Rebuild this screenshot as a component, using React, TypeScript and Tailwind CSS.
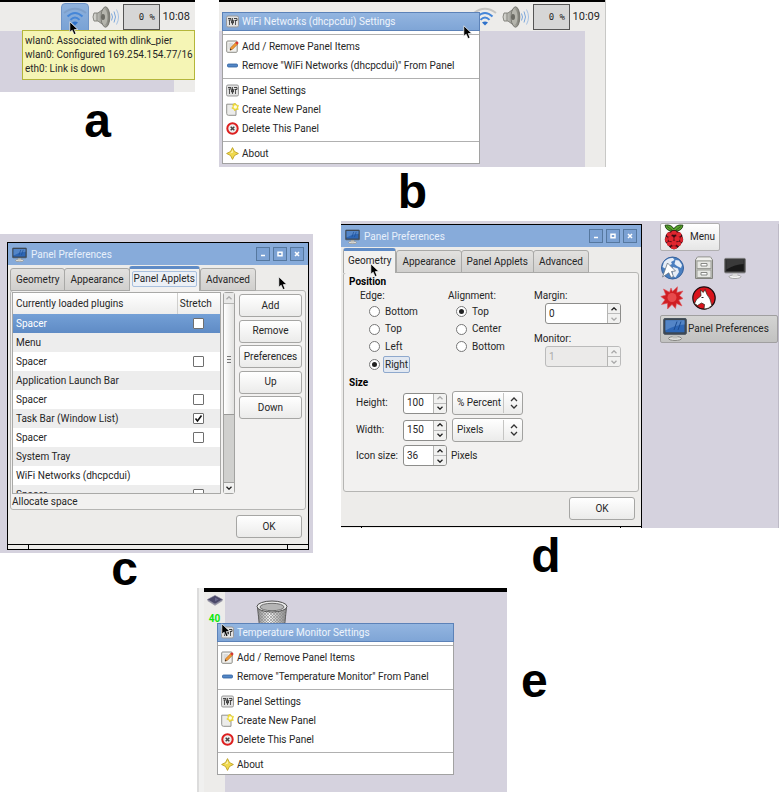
import React from "react";

function Cursor({ className = "" }: { className?: string }) {
  return (
    <svg viewBox="0 0 10 15" width="10" height="15" className={"pointer-events-none absolute z-20 " + className} aria-hidden="true">
      <path d="M0.8 0.8 L0.8 11.2 L3.2 9.2 L5 13.6 L7 12.8 L5.3 8.6 L8.8 8.4 Z" fill="#000" stroke="#fff" strokeWidth="0.7" />
    </svg>
  );
}

function WifiIcon({ topColor }: { topColor: string }) {
  return (
    <svg viewBox="0 0 24 20" width="24" height="20" fill="none" strokeWidth="2" aria-hidden="true">
      <path d="M1 6 Q12 -2.500 23 6" stroke={topColor} />
      <path d="M4.500 9.500 Q12 2.500 19.500 9.500" stroke="#4586d8" />
      <path d="M7.500 12.900 Q12 8.300 16.500 12.900" stroke="#4586d8" />
      <path d="M9 15.500 Q12 13.500 15 15.500 L12 18.500 Z" fill="#2f72cb" />
    </svg>
  );
}

function SpeakerIcon() {
  return (
    <svg viewBox="0 0 28 24" width="28" height="24" aria-hidden="true">
      <defs>
        <linearGradient id="cone" x1="0" x2="1">
          <stop offset="0" stopColor="#deded9" />
          <stop offset="1" stopColor="#8b8b84" />
        </linearGradient>
        <linearGradient id="rim" x1="0" x2="1">
          <stop offset="0" stopColor="#c9c9c2" />
          <stop offset="1" stopColor="#77776f" />
        </linearGradient>
      </defs>
      <path d="M2 8 Q0 12 2 16 L6 16 L12 20.500 L12 3.500 L6 8 Z" fill="url(#cone)" stroke="#7c7c75" strokeWidth="0.900" />
      <path d="M5 8 V16" stroke="#8b8b85" fill="none" />
      <ellipse cx="13.500" cy="12" rx="4.300" ry="10.200" fill="url(#rim)" stroke="#70706a" strokeWidth="0.900" />
      <ellipse cx="12.500" cy="12" rx="3" ry="7.500" fill="#b5b5ad" />
      <ellipse cx="11" cy="12" rx="2" ry="3" fill="#6b6b64" />
      <g fill="none" stroke="#7ba7dc">
        <path d="M19.500 8.500 Q21.500 12 19.500 15.500" />
        <path d="M22 6.500 Q25 12 22 17.500" />
        <path d="M24.500 4.500 Q28.500 12 24.500 19.500" stroke="#a5c1e4" />
      </g>
    </svg>
  );
}

function ScreenIcon({ size = 15, dark = false }: { size?: number; dark?: boolean }) {
  return (
    <svg viewBox="0 0 24 24" width={size} height={size} aria-hidden="true">
      <ellipse cx="12" cy="21.500" rx="6.500" ry="2" fill={dark ? "#f4f4f4" : "#e0e0dd"} stroke={dark ? "#9a9a9a" : "#7f7f7b"} strokeWidth="0.900" />
      <path d="M9.500 17 H14.500 V21.500 H9.500 Z" fill={dark ? "#dcdcdc" : "#bfbfbb"} />
      <rect x="0.700" y="1.500" width="22.600" height="15.800" rx="1.200" fill={dark ? "#3b3b3b" : "#3c4650"} stroke={dark ? "#777" : "#46525f"} />
      <rect x="2.500" y="3.300" width="19" height="12" fill={dark ? "#191919" : "#2d66b5"} />
      <path d="M2.500 3.300 H21.500 V7.500 Q12 8 2.500 13.500 Z" fill={dark ? "#3a3a3a" : "#5385c7"} />
      {!dark && <path d="M14 4.500 L11 13 M18 4.500 L15 13" stroke="#1b4c91" strokeWidth="1" />}
    </svg>
  );
}

function PrefsIcon() {
  return (
    <svg viewBox="0 0 13 13" width="13" height="13" aria-hidden="true">
      <rect x="0.500" y="1" width="12" height="11" rx="1.500" fill="#e2e2e2" stroke="#999" />
      <path d="M3.500 5 V10 M6.500 3 V10 M9.500 5 V10" fill="none" stroke="#555" />
      <path d="M2 3.500 H5 V5 H2.500 M8 3.500 H11 V5.500 H8.500 M5.500 5.500 H7.500 V8 H5.500 Z" fill="none" stroke="#333" strokeWidth="0.900" />
    </svg>
  );
}

function EditIcon() {
  return (
    <svg viewBox="0 0 13 13" width="13" height="13" aria-hidden="true">
      <rect x="0.700" y="1" width="10.500" height="11.300" rx="1" fill="#f1f1ee" stroke="#8b8b86" />
      <path d="M2.500 4 H7 M2.500 6 H6 M2.500 8 H5" stroke="#bbb" strokeWidth="0.800" />
      <path d="M4 10.200 L4.800 7.600 L10.200 2 L12 3.700 L6.500 9.300 Z" fill="#f19a31" stroke="#a5591c" strokeWidth="0.600" />
      <path d="M9.300 2.900 L10.600 1.400 Q12.300 1.300 12.500 3 L11.200 4.600 Z" fill="#d93333" />
      <path d="M4 10.200 L4.500 8.600 L5.600 9.700 Z" fill="#222" />
    </svg>
  );
}

function MinusIcon() {
  return (
    <svg viewBox="0 0 13 13" width="13" height="13" aria-hidden="true">
      <rect x="1.500" y="5" width="10" height="3" rx="1" fill="#5487c6" stroke="#2f5f9f" strokeWidth="0.800" />
    </svg>
  );
}

function NewIcon() {
  return (
    <svg viewBox="0 0 13 13" width="13" height="13" aria-hidden="true">
      <path d="M0.700 1.200 H10 V12.300 H2.500 Q0.700 12.300 0.700 10.500 Z" fill="#ececea" stroke="#93938f" />
      <path d="M9 0 L10.200 2 L12.600 2.400 L11.800 4.500 L12.300 6.500 L10 6.500 L8.800 8 L7.800 6 L5.800 5.200 L7 3.500 L6.800 1.500 Z" fill="#f2df3a" stroke="#dcc21d" strokeWidth="0.500" />
      <circle cx="9.300" cy="4" r="1.700" fill="#fffce0" />
    </svg>
  );
}

function DeleteIcon() {
  return (
    <svg viewBox="0 0 13 13" width="13" height="13" aria-hidden="true">
      <circle cx="6.500" cy="6.500" r="5.200" fill="#eee" stroke="#dd2020" strokeWidth="2" />
      <path d="M4.700 4.700 L8.300 8.300 M8.300 4.700 L4.700 8.300" stroke="#444" strokeWidth="1.500" />
    </svg>
  );
}

function AboutIcon() {
  return (
    <svg viewBox="0 0 13 13" width="13" height="13" aria-hidden="true">
      <path d="M6.500 0.600 L8.500 4.500 L12.400 6.500 L8.500 8.500 L6.500 12.400 L4.500 8.500 L0.600 6.500 L4.500 4.500 Z" fill="#f0d94e" stroke="#b89a1c" strokeWidth="0.800" />
      <path d="M6.500 2.500 L7 5.500 L4 6.500 L5.500 5 Z" fill="#fdf6c0" />
    </svg>
  );
}

function RaspberryIcon() {
  return (
    <svg viewBox="0 0 20 26" width="20" height="26" aria-hidden="true">
      <path d="M9.500 7 Q2 7.500 1 1.200 Q7.500 0 9.800 5 Q12.500 0 19 1.200 Q18 7.500 10.500 7 Z" fill="#59a52c" stroke="#1d3a12" strokeWidth="0.900" />
      <path d="M3 2.500 L8 6 M17 2.500 L12 6" stroke="#26501a" strokeWidth="0.700" />
      <path d="M6 7.500 Q10 4.500 14 7.500 Q18.500 9.500 18.500 13 Q20.500 17 17 20 Q14 24.500 10 25.500 Q6 24.500 3 20 Q-0.500 17 1.500 13 Q1.500 9.500 6 7.500 Z" fill="#3a0a12" />
      <g fill="#e0262f">
        <ellipse cx="10" cy="8.700" rx="2.900" ry="2" />
        <ellipse cx="5.300" cy="10.500" rx="2.600" ry="2.300" />
        <ellipse cx="14.700" cy="10.500" rx="2.600" ry="2.300" />
        <ellipse cx="6.900" cy="14.700" rx="2.800" ry="2.600" />
        <ellipse cx="13.100" cy="14.700" rx="2.800" ry="2.600" />
        <ellipse cx="2.500" cy="15.500" rx="1.500" ry="2.700" />
        <ellipse cx="17.500" cy="15.500" rx="1.500" ry="2.700" />
        <ellipse cx="10" cy="19.200" rx="3" ry="2.600" />
        <ellipse cx="5.100" cy="19.700" rx="2.200" ry="2.200" />
        <ellipse cx="14.900" cy="19.700" rx="2.200" ry="2.200" />
        <ellipse cx="10" cy="23.500" rx="3" ry="1.500" />
      </g>
    </svg>
  );
}

function GlobeIcon() {
  return (
    <svg viewBox="0 0 24 24" width="24" height="24" aria-hidden="true">
      <circle cx="12.500" cy="12" r="11" fill="#4a7fc0" stroke="#35619c" />
      <g fill="#e6edf6">
        <path d="M4 6 Q8 1.500 13 2 L14.500 4 L11 6 L12 8 L8 10 L6 13 L2.500 11 Z" />
        <path d="M15.500 4 L19 4.500 L22 9 L21 12 L17 10 L14.500 8 Z" />
        <path d="M13 11 L18 12.500 L19 16 L15.500 21.500 L13 20 L12.500 15 Z" />
      </g>
      <path d="M7.500 7 L15.500 15 L11.500 15.500 L13.500 20.500 L11 21.500 L8.800 16.800 L2.500 21 Z" fill="#fff" stroke="#6a7684" strokeWidth="0.800" />
    </svg>
  );
}

function CabinetIcon() {
  return (
    <svg viewBox="0 0 20 24" width="20" height="24" aria-hidden="true">
      <path d="M3.500 1 H16.500 L18.500 4 V22.500 H1.500 V4 Z" fill="#c9cac5" stroke="#83847f" />
      <path d="M3.500 1.500 H16.500 L18 4 H2 Z" fill="#f0f0ee" />
      <rect x="3" y="5" width="14" height="7.500" fill="#e6e7e3" stroke="#9c9d98" />
      <rect x="3" y="14" width="14" height="7.500" fill="#e6e7e3" stroke="#9c9d98" />
      <path d="M7 7.500 H13 V10 H7 Z M7 16.500 H13 V19 H7 Z" fill="#fff" stroke="#7c7d78" strokeWidth="0.900" />
    </svg>
  );
}

function StarburstIcon() {
  return (
    <svg viewBox="0 0 24 24" width="24" height="24" aria-hidden="true">
      <path d="M12.500 5.500 L17.500 0.800 L16.800 6.500 L23 5 L19.500 9.500 L23 12.500 L18.800 14 L22 20 L16.500 17.500 L15.500 22.500 L12 18.500 L7.500 23 L7.500 17.200 L1.500 18.500 L5 13.800 L0.800 10.500 L5.800 9 L3.500 3 L9.500 6.200 L11 2 Z" fill="#cf1f24" stroke="#e0565a" strokeWidth="0.600" />
      <circle cx="12" cy="11.500" r="4.500" fill="#e84a4c" />
    </svg>
  );
}

function WolfIcon() {
  return (
    <svg viewBox="0 0 24 24" width="24" height="24" aria-hidden="true">
      <circle cx="12" cy="12" r="11.200" fill="#d9141c" stroke="#1d1013" strokeWidth="1.200" />
      <path d="M2.500 17.500 L4.500 13.500 L9 9.800 L8.500 4 L11.300 6.500 L13 3.500 L15 8.500 Q18.500 12 19.800 19.500 Q16.500 23.200 12 23 L12.500 18.500 L9.500 17 L5.500 19.500 Z" fill="#fff" stroke="#221" strokeWidth="0.700" />
      <path d="M9.500 11.500 L11.500 11.500" stroke="#222" />
    </svg>
  );
}

function ChipIcon() {
  return (
    <svg viewBox="0 0 16 11" width="16" height="11" aria-hidden="true">
      <path d="M0.500 4.500 L8 9 L15.500 4.500 L15.500 6 L8 10.700 L0.500 6 Z" fill="#9b9aa8" />
      <path d="M0.500 4.500 L8 0.500 L15.500 4.500 L8 9 Z" fill="#4a4868" stroke="#76748f" strokeWidth="0.600" />
      <path d="M8 2.500 L11.500 4.500 L8 6.500 Z" fill="#68668c" />
    </svg>
  );
}

function TrashIcon() {
  return (
    <svg viewBox="0 0 32 32" width="32" height="32" aria-hidden="true">
      <defs>
        <pattern id="mesh" width="3" height="3" patternUnits="userSpaceOnUse">
          <path d="M0 0 L3 3 M3 0 L0 3" stroke="#888" strokeWidth="0.600" />
        </pattern>
        <linearGradient id="bin" x1="0" x2="1">
          <stop offset="0" stopColor="#8a8a8a" />
          <stop offset="0.400" stopColor="#f4f4f4" />
          <stop offset="1" stopColor="#888" />
        </linearGradient>
      </defs>
      <path d="M1.500 8 L4 32 H28 L30.500 8 Z" fill="url(#bin)" stroke="#555" />
      <path d="M1.500 8 L4 32 H28 L30.500 8 Z" fill="url(#mesh)" />
      <ellipse cx="16" cy="7.500" rx="15" ry="5.500" fill="#ededed" stroke="#4d4d4d" />
      <ellipse cx="16" cy="8" rx="12" ry="3.700" fill="#b5b5b5" stroke="#6c6c6c" />
    </svg>
  );
}

function Chevrons() {
  return (
    <svg viewBox="0 0 8 12" width="8" height="12" fill="none" stroke="#333" strokeWidth="1.300" aria-hidden="true">
      <path d="M1 4 L4 1 L7 4 M1 8 L4 11 L7 8" />
    </svg>
  );
}

function Arrow({ up = false, faded = false }: { up?: boolean; faded?: boolean }) {
  return (
    <svg viewBox="0 0 6 4" width="6" height="4" fill="none" stroke={faded ? "#aaa" : "#222"} strokeWidth="1.300" aria-hidden="true">
      <path d={up ? "M0.500 3.300 L3 0.800 L5.500 3.300" : "M0.500 0.700 L3 3.200 L5.500 0.700"} />
    </svg>
  );
}

function ContextMenu({ subject, className }: { subject: string; className: string }) {
  const groups = [
    [
      { label: "Add / Remove Panel Items", icon: <EditIcon /> },
      { label: `Remove "${subject}" From Panel`, icon: <MinusIcon /> },
    ],
    [
      { label: "Panel Settings", icon: <PrefsIcon /> },
      { label: "Create New Panel", icon: <NewIcon /> },
      { label: "Delete This Panel", icon: <DeleteIcon /> },
    ],
    [{ label: "About", icon: <AboutIcon /> }],
  ];
  return (
    <div role="menu" className={"absolute z-10 border-x border-b border-[#a2a2a2] bg-white " + className}>
      <div className="-mx-px">
        <button role="menuitem" className="flex h-[19px] w-full items-center gap-[3px] border border-[#5c82b8] bg-linear-to-b from-[#93b5e0] to-[#7fa5d6] pl-[3px] text-[#eef4fc]">
          <PrefsIcon />
          {subject} Settings
        </button>
      </div>
      {groups.map((group, i) => (
        <React.Fragment key={i}>
          <div role="separator" className="flex h-1.5 items-center">
            <div className="h-px w-full bg-[#b0b0b0]" />
          </div>
          {group.map((item) => (
            <button key={item.label} role="menuitem" className="flex h-[19px] w-full items-center gap-[3px] pl-[3px] whitespace-nowrap">
              {item.icon}
              {item.label}
            </button>
          ))}
        </React.Fragment>
      ))}
    </div>
  );
}

function TopPanel({ time, active = false }: { time: string; active?: boolean }) {
  return (
    <div className="flex h-[31px] items-center justify-end border-t-2 border-black bg-[#edecea] pr-[5px]">
      <button
        aria-label="Network"
        className={
          active
            ? "flex h-7 w-7 items-center justify-center rounded-t-sm border border-[#6e94c7] bg-linear-to-b from-[#8fb2dd] to-[#79a2d5]"
            : "flex h-7 w-7 items-center justify-center"
        }
      >
        <WifiIcon topColor={active ? "#7d9fca" : "#c5c5c3"} />
      </button>
      <button aria-label="Volume" className="mx-[3px] flex">
        <SpeakerIcon />
      </button>
      <div className="flex h-[26px] w-[37px] items-center justify-end border border-[#555] bg-[#d6d6d6] pr-1 font-['DejaVu_Sans_Mono',monospace] text-[9px]">
        0 %
      </div>
      <time className="w-[30px] text-right text-[11px]">{time}</time>
    </div>
  );
}

function TitleButton({ label, children }: { label: string; children: React.ReactNode }) {
  return (
    <button aria-label={label} className="flex h-3.5 w-3.5 items-center justify-center border border-[#56789f] bg-[#7ba1d3]">
      <svg viewBox="0 0 6 6" width="6" height="6" fill="none" stroke="#fff" strokeWidth="1.500" aria-hidden="true">
        {children}
      </svg>
    </button>
  );
}

const TABS = ["Geometry", "Appearance", "Panel Applets", "Advanced"];

function Button({ className = "", children }: { className?: string; children: React.ReactNode }) {
  return (
    <button className={"h-[23px] rounded-[3px] border border-[#a6a6a4] bg-linear-to-b from-white to-[#ebebea] text-center " + className}>
      {children}
    </button>
  );
}

function PrefsWindow({ active, clipped = false, children }: { active: string; clipped?: boolean; children: React.ReactNode }) {
  return (
    <section
      className={
        clipped
          ? "relative min-w-0 flex-1 border-t border-r border-black bg-[#edecea]"
          : "relative border border-black bg-[#edecea]"
      }
    >
      <header className="flex h-[22px] items-center gap-[3px] bg-[#87abda] pr-1 pl-1">
        <ScreenIcon />
        <h2 className="flex-1 pt-0.5 pl-px text-[#e7f0fb]">Panel Preferences</h2>
        <TitleButton label="Minimise"><path d="M1 4.500 H5" /></TitleButton>
        <TitleButton label="Maximise"><path d="M1 1.200 H5 V4.800 H1 Z" /></TitleButton>
        <TitleButton label="Close"><path d="M1 1 L5 5 M5 1 L1 5" /></TitleButton>
      </header>
      <div role="tablist" className="relative z-10 flex h-[26px] items-end px-0.5">
        {TABS.map((tab) =>
          tab === active ? (
            <button
              key={tab}
              role="tab"
              aria-selected="true"
              className="h-[25px] rounded-t-[3px] border border-t-[3px] border-b-0 border-[#a9a9a7] border-t-[#5f8bc6] bg-[#f2f1f0] px-0.5 pb-0.5"
            >
              <span className={clipped ? "block px-0.5" : "block rounded-xs border border-[#a9c0de] bg-[#ecf0f6] px-px"}>{tab}</span>
            </button>
          ) : (
            <button
              key={tab}
              role="tab"
              aria-selected="false"
              className="-mr-px h-[23px] rounded-t-[3px] border border-[#a9a9a7] bg-linear-to-b from-[#e2e1df] to-[#d0cfcd] px-[5px] pt-px"
            >
              {tab}
            </button>
          ),
        )}
      </div>
      <div className="mx-0.5 -mt-px min-h-[220px] rounded-[3px] border border-[#b5b5b3] bg-[#f2f1f0]">{children}</div>
      <div className="mt-[5px] mb-[6px] flex justify-end pr-[6px]">
        <Button className="w-[66px]">OK</Button>
      </div>
      <div className={clipped ? "flex h-0.5 border-t border-black px-5" : "flex h-[5px] border-t border-black px-5"}>
        <div className="flex-1 border-x border-black" />
      </div>
    </section>
  );
}

const PLUGINS: { name: string; stretch?: boolean }[] = [
  { name: "Spacer", stretch: false },
  { name: "Menu" },
  { name: "Spacer", stretch: false },
  { name: "Application Launch Bar" },
  { name: "Spacer", stretch: false },
  { name: "Task Bar (Window List)", stretch: true },
  { name: "Spacer", stretch: false },
  { name: "System Tray" },
  { name: "WiFi Networks (dhcpcdui)" },
  { name: "Spacer", stretch: false },
];

function AppletsTab() {
  return (
    <div className="pt-px pl-px">
      <div className="flex h-[202px] pr-[3px]">
        <div className="min-w-0 flex-1 overflow-hidden border border-[#a9a9a7] bg-white">
          <table className="w-full border-collapse">
            <thead>
              <tr className="h-[21px] bg-linear-to-b from-white to-[#ededec] text-left">
                <th className="border-r border-[#cfcfcd] pl-[3px] font-normal">Currently loaded plugins</th>
                <th className="w-[43px] pr-1.5 text-center font-normal">Stretch</th>
              </tr>
            </thead>
            <tbody>
              {PLUGINS.map((p, i) => (
                <tr key={i} className={i === 0 ? "h-[19px] bg-linear-to-b from-[#74a0d6] to-[#5f8bc5] text-white" : i % 2 ? "h-[19px] bg-[#ededed]" : "h-[19px] bg-white"}>
                  <td className="pt-px pl-[3px]">{p.name}</td>
                  <td>
                    {p.stretch !== undefined && (
                      <span className="relative flex h-[11px] justify-center">
                        <input
                          type="checkbox"
                          aria-label={`Stretch ${p.name}`}
                          defaultChecked={p.stretch}
                          className="peer h-[11px] w-[11px] appearance-none rounded-[1px] border border-[#6f6f6f] bg-white"
                        />
                        <svg viewBox="0 0 9 9" width="9" height="9" fill="none" stroke="#111" strokeWidth="1.600" className="pointer-events-none invisible absolute top-px peer-checked:visible">
                          <path d="M1.500 4.500 L3.500 7 L7.500 1.500" />
                        </svg>
                      </span>
                    )}
                  </td>
                </tr>
              ))}
            </tbody>
          </table>
        </div>
        <div className="mr-1 ml-0.5 flex w-3 flex-col rounded-[3px] border border-[#a2a2a0] bg-[#d0d0ce]">
          <button aria-label="Scroll up" className="flex h-[11px] items-center justify-center border-b border-[#b5b5b3] bg-[#e9e9e8]">
            <Arrow up faded />
          </button>
          <div className="flex h-[111px] flex-col items-center justify-center gap-0.5 border-b border-[#9a9a98] bg-linear-to-r from-white to-[#e2e2e0]">
            <div className="h-px w-1 bg-[#777]" />
            <div className="h-px w-1 bg-[#777]" />
            <div className="h-px w-1 bg-[#777]" />
          </div>
          <div className="flex-1" />
          <button aria-label="Scroll down" className="flex h-[11px] items-center justify-center border-t border-[#a2a2a0] bg-[#f1f1f0]">
            <Arrow />
          </button>
        </div>
        <div className="flex h-[127px] w-[63px] flex-col justify-between pt-0.5">
          <Button>Add</Button>
          <Button>Remove</Button>
          <Button>Preferences</Button>
          <Button>Up</Button>
          <Button>Down</Button>
        </div>
      </div>
      <p className="leading-[15px]">Allocate space</p>
    </div>
  );
}

function Radios({ name, options, checked, className }: { name: string; options: string[]; checked: string; className: string }) {
  return (
    <fieldset className="min-w-0">
      <legend className="leading-3">{name}:</legend>
      <div className={"grid h-[71px] grid-rows-4 pt-px " + className}>
        {options.map((o) => (
          <label key={o} className="flex items-center gap-[3px]">
            <input
              type="radio"
              name={name}
              defaultChecked={o === checked}
              className="h-[11px] w-[11px] appearance-none rounded-full border border-[#777] bg-white checked:border-[3px] checked:border-white checked:bg-[#222] checked:outline checked:-outline-offset-1 checked:outline-[#777]"
            />
            <span className={o === "Right" ? "rounded-xs border border-[#8fa9cd] bg-[#e2e8f1] px-px leading-[15px]" : "px-0.5"}>{o}</span>
          </label>
        ))}
      </div>
    </fieldset>
  );
}

function Spin({ id, value, className, atMin = false, atMax = false, disabled = false }: { id: string; value: string; className: string; atMin?: boolean; atMax?: boolean; disabled?: boolean }) {
  return (
    <div className={"flex h-[21px] overflow-hidden rounded-[3px] border " + (disabled ? "border-[#bbb] bg-[#ebeae9] text-[#aaa] " : "border-[#8d8d8b] bg-white ") + className}>
      <input id={id} defaultValue={value} disabled={disabled} className="min-w-0 flex-1 pl-[3px] outline-none" />
      <div className="flex w-[13px] flex-col border-l border-[#b5b5b3] bg-[#f1f1f0]">
        <button aria-label="Increase" disabled={disabled} className="flex flex-1 items-center justify-center border-b border-[#bbb]">
          <Arrow up faded={disabled || atMax} />
        </button>
        <button aria-label="Decrease" disabled={disabled} className="flex flex-1 items-center justify-center">
          <Arrow faded={disabled || atMin} />
        </button>
      </div>
    </div>
  );
}

function UnitSelect({ label, value }: { label: string; value: string }) {
  return (
    <div className="relative h-6 w-[71px]">
      <select aria-label={label} defaultValue={value} className="h-full w-full appearance-none rounded-[3px] border border-[#a2a2a0] bg-linear-to-b from-white to-[#ebebea] pl-1 outline-none">
        <option>% Percent</option>
        <option>Pixels</option>
      </select>
      <div className="pointer-events-none absolute inset-y-0.5 right-0 flex w-5 items-center justify-center border-l border-[#c5c5c3]">
        <Chevrons />
      </div>
    </div>
  );
}

function GeometryTab() {
  return (
    <div className="pt-px pl-[5px]">
      <h3 className="leading-4 font-bold text-black">Position</h3>
      <div className="grid grid-cols-[88px_86px_1fr] pl-[11px]">
        <Radios name="Edge" options={["Bottom", "Top", "Left", "Right"]} checked="Right" className="pl-[9px]" />
        <Radios name="Alignment" options={["Top", "Center", "Bottom"]} checked="Top" className="pl-2" />
        <div>
          <label htmlFor="margin" className="block leading-3">Margin:</label>
          <Spin id="margin" value="0" atMin className="mt-px ml-[11px] w-[76px]" />
          <label htmlFor="monitor" className="mt-[9px] block leading-3">Monitor:</label>
          <Spin id="monitor" value="1" disabled className="mt-px ml-[11px] w-[76px]" />
        </div>
      </div>
      <h3 className="mt-0.5 leading-4 font-bold text-black">Size</h3>
      <div className="flex flex-col gap-[3px] pl-[7px]">
        <div className="flex items-center">
          <label htmlFor="height" className="w-[47px]">Height:</label>
          <Spin id="height" value="100" atMax className="mr-[5px] w-11" />
          <UnitSelect label="Height unit" value="% Percent" />
        </div>
        <div className="flex items-center">
          <label htmlFor="width" className="w-[47px]">Width:</label>
          <Spin id="width" value="150" className="mr-[5px] w-11" />
          <UnitSelect label="Width unit" value="Pixels" />
        </div>
        <div className="flex items-center">
          <label htmlFor="icon-size" className="w-[47px] whitespace-nowrap">Icon size:</label>
          <Spin id="icon-size" value="36" className="mr-1 w-11" />
          <span>Pixels</span>
        </div>
      </div>
    </div>
  );
}

function SidePanel() {
  return (
    <aside className="flex w-[137px] flex-none flex-col items-start border-r border-[#bdbac6] pl-[18px]">
      <button className="-mt-px flex h-7 items-center gap-1.5 rounded-xs border border-[#b0afb0] bg-linear-to-b from-white to-[#e6e6e6] pr-1 pl-[3px]">
        <RaspberryIcon />
        Menu
      </button>
      <div className="mt-[5px] flex items-center gap-2.5">
        <button aria-label="Web browser"><GlobeIcon /></button>
        <button aria-label="File manager"><CabinetIcon /></button>
        <button aria-label="Terminal"><ScreenIcon size={22} dark /></button>
      </div>
      <div className="mt-1.5 flex items-center gap-2">
        <button aria-label="Mathematica"><StarburstIcon /></button>
        <button aria-label="Wolfram"><WolfIcon /></button>
      </div>
      <button className="mt-[5px] flex h-7 w-full items-center gap-px rounded-xs border border-[#a09fa0] bg-linear-to-b from-[#d4d4d3] to-[#c2c2c1] pl-0.5 whitespace-nowrap">
        <ScreenIcon size={24} />
        Panel Preferences
      </button>
    </aside>
  );
}

const CAPTION = "text-center font-['Liberation_Sans',Arial,sans-serif] text-5xl leading-6 font-bold text-black";

export default function App() {
  return (
    <main className="bg-white font-[Roboto,sans-serif] text-[10px] leading-[14px] text-[#262626]">
      <div className="grid grid-cols-[195fr_387fr_154fr] gap-6">
        <figure className="min-w-0">
          <div className="relative flex h-[92px] flex-col">
            <TopPanel time="10:08" active />
            <div className="flex-1 border-r-[21px] border-[#edecea] bg-[#d5d2de]" />
            <div role="tooltip" className="absolute top-[30px] right-0 w-[173px] border border-[#b4b63a] bg-[#f5f5b5] px-0.5 py-[3px] whitespace-nowrap">
              <p>wlan0: Associated with dlink_pier</p>
              <p>wlan0: Configured 169.254.154.77/16</p>
              <p>eth0: Link is down</p>
            </div>
            <Cursor className="top-[21px] left-[69px]" />
          </div>
          <figcaption className={"mt-[17px] " + CAPTION}>a</figcaption>
        </figure>

        <figure className="min-w-0">
          <div className="relative flex h-[167px] flex-col border-r border-[#c8c8c6]">
            <TopPanel time="10:09" />
            <div className="flex-1 border-r-[20px] border-[#edecea] bg-[#d5d2de]" />
            <ContextMenu subject="WiFi Networks (dhcpcdui)" className="top-3 left-[3px] w-[258px]" />
            <Cursor className="top-[25px] left-[244px]" />
          </div>
          <figcaption className={"mt-[13px] " + CAPTION}>b</figcaption>
        </figure>
      </div>

      <div className="mt-[17px] grid grid-cols-[313fr_438fr] gap-7 pr-[5px]">
        <figure className="mt-[13px] min-w-0">
          <div className="relative bg-[#d5d2de] pt-2 pr-1 pb-[3px] pl-[7px]">
            <PrefsWindow active="Panel Applets">
              <AppletsTab />
            </PrefsWindow>
            <Cursor className="top-[42px] left-[278px]" />
          </div>
          <figcaption className={"mt-1 pr-16 " + CAPTION}>c</figcaption>
        </figure>

        <figure className="min-w-0">
          <div className="relative flex bg-[#d5d2de] pt-[3px]">
            <PrefsWindow active="Geometry" clipped>
              <GeometryTab />
            </PrefsWindow>
            <SidePanel />
            <Cursor className="top-[42px] left-[29px]" />
          </div>
          <figcaption className={"mt-4 pr-7 " + CAPTION}>d</figcaption>
        </figure>
      </div>

      <figure className="mt-[7px] grid grid-cols-[197fr_310fr_277fr] items-center">
        <div className="relative col-start-2 flex h-[204px] border-l-2 border-[#dcdcdc] bg-[#f0f0ef] pl-[5px]">
          <div className="flex flex-1 border-t-4 border-black">
            <div className="flex w-[21px] flex-col items-center gap-1.5 bg-[#edecea] pt-[3px]">
              <ChipIcon />
              <span className="font-bold text-[#0be80b]">40</span>
            </div>
            <div className="flex-1 bg-[#d5d2de] pt-[7px] pl-[31px]">
              <TrashIcon />
            </div>
          </div>
          <ContextMenu subject="Temperature Monitor" className="top-[35px] left-[18px] w-[237px]" />
          <Cursor className="top-[35px] left-[22px]" />
        </div>
        <figcaption className={"pb-4.5 pl-[14px] " + CAPTION + " justify-self-start"}>e</figcaption>
      </figure>
    </main>
  );
}
